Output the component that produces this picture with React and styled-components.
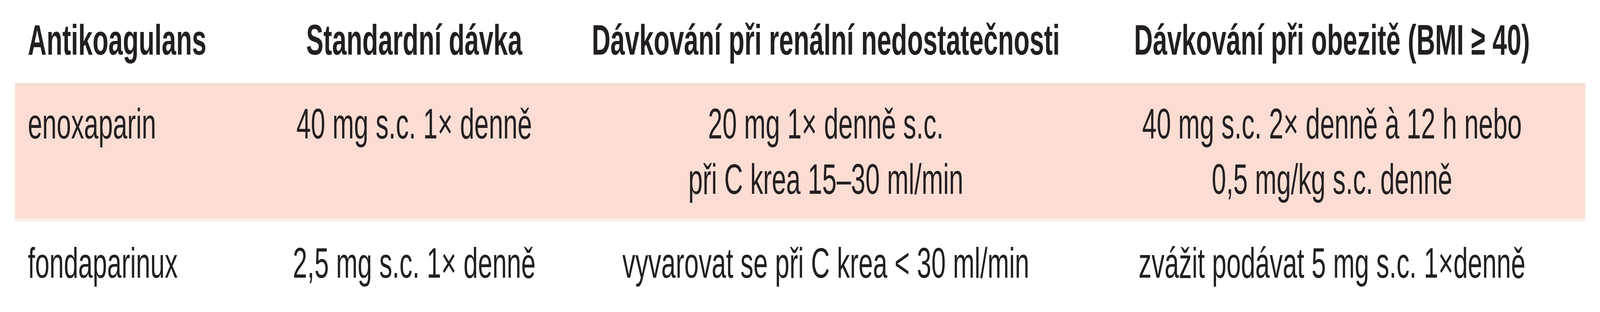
import React from 'react'
import styled, { createGlobalStyle } from 'styled-components'

// The table is drawn on a 6729px wide design grid. The browser window
// may be narrower, so the whole sheet is squeezed sideways to fit.
const DESIGN_WIDTH = 6729

const GlobalStyle = createGlobalStyle`
  html, body {
    margin: 0;
    padding: 0;
    background: #ffffff;
    overflow: hidden;
  }
  body {
    font-family: "Liberation Sans", Arial, sans-serif;
    color: #231f20;
  }
`

const Sheet = styled.div`
  width: ${DESIGN_WIDTH}px;
  height: 800px;
  transform-origin: 0 0;
`

const Table = styled.div`
  width: 6604px;
  margin-left: 63px;
`

const Row = styled.div`
  display: grid;
  grid-template-columns: 1012px 1334px 2128px 2130px;
  box-sizing: border-box;
  height: ${p => p.$height}px;
  padding-top: ${p => p.$top}px;
  background: ${p => (p.$shade ? '#fbddd4' : 'transparent')};
  border-top: ${p => (p.$shade ? '7px solid #f6dcd4' : 'none')};
  box-shadow: ${p => (p.$shade ? '0 8px 0 #fdf0eb' : 'none')};
`

const Cell = styled.div`
  font-size: 109px;
  line-height: 142px;
  font-weight: ${p => (p.$head ? 700 : 400)};
  text-align: ${p => (p.$left ? 'left' : 'center')};
  padding-left: ${p => (p.$left ? '54px' : '0')};
  white-space: nowrap;
`

const header = [
  'Antikoagulans',
  'Standardní dávka',
  'Dávkování při renální nedostatečnosti',
  'Dávkování při obezitě (BMI ≥ 40)',
]

const rows = [
  {
    shade: true,
    height: 347,
    top: 26,
    cells: [
      'enoxaparin',
      '40 mg s.c. 1× denně',
      ['20 mg 1× denně s.c.', 'při C krea 15–30 ml/min'],
      ['40 mg s.c. 2× denně à 12 h nebo', '0,5 mg/kg s.c. denně'],
    ],
  },
  {
    shade: false,
    height: 240,
    top: 43,
    cells: [
      'fondaparinux',
      '2,5 mg s.c. 1× denně',
      'vyvarovat se při C krea < 30 ml/min',
      'zvážit podávat 5 mg s.c. 1×denně',
    ],
  },
]

const Lines = ({ value }) =>
  Array.isArray(value)
    ? value.map((l, i) => <div key={i}>{l}</div>)
    : value

export default function App() {
  const scale = Math.min(1, window.innerWidth / DESIGN_WIDTH)

  return (
    <>
      <GlobalStyle />
      <Sheet style={{ transform: `scaleX(${scale})` }}>
        <Table>
          <Row $height={213} $top={31}>
            {header.map((h, i) => (
              <Cell key={i} $head $left={i === 0}>{h}</Cell>
            ))}
          </Row>
          {rows.map((r, ri) => (
            <Row key={ri} $shade={r.shade} $height={r.height} $top={r.top}>
              {r.cells.map((c, i) => (
                <Cell key={i} $left={i === 0}><Lines value={c} /></Cell>
              ))}
            </Row>
          ))}
        </Table>
      </Sheet>
    </>
  )
}
